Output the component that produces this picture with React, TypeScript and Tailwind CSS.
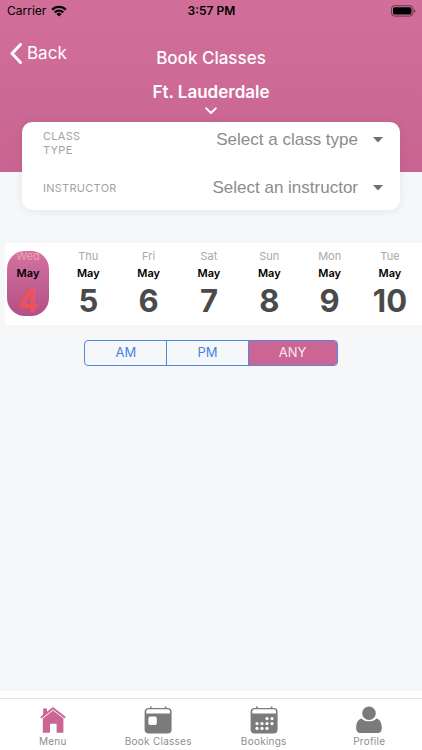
import { useState, type ReactNode } from "react";

const days = [
  { name: "Wed", month: "May", date: 4 },
  { name: "Thu", month: "May", date: 5 },
  { name: "Fri", month: "May", date: 6 },
  { name: "Sat", month: "May", date: 7 },
  { name: "Sun", month: "May", date: 8 },
  { name: "Mon", month: "May", date: 9 },
  { name: "Tue", month: "May", date: 10 },
];

const periods = ["AM", "PM", "ANY"];

function WifiIcon() {
  return (
    <svg viewBox="0 0 16 12" className="h-3 w-4" aria-hidden="true">
      <g fill="none" stroke="#000" strokeWidth="2.3">
        <path d="M1.2 4.7a9.7 9.7 0 0 1 13.6 0" />
        <path d="M3.8 7.4a6 6 0 0 1 8.4 0" />
      </g>
      <path d="M8 11.6 5.4 9a3.7 3.7 0 0 1 5.2 0z" />
    </svg>
  );
}

function BatteryIcon() {
  return (
    <svg viewBox="0 0 25 12" className="h-3 w-[25px]" aria-hidden="true">
      <rect x="0.5" y="0.7" width="21.4" height="10.4" rx="3" fill="none" stroke="#000" strokeOpacity="0.5" />
      <rect x="2" y="2.2" width="18.4" height="7.4" rx="1.6" />
      <path d="M23.2 4.2c1.6.6 1.6 3 0 3.6z" fillOpacity="0.6" />
    </svg>
  );
}

function HomeIcon() {
  return (
    <svg viewBox="0 0 26 28" className="h-7 w-[26px]" fill="#ca6594" aria-hidden="true">
      <path d="M3.2 2.6h3.8v4L3.2 9.8z" />
      <path d="M13 1 25.8 11 24.6 12.5 13 3.5 1.4 12.5.2 11z" />
      <path d="M13 4.4 23.4 12.5V26.8h-6.8v-9H10v9H2.8V12.5z" />
    </svg>
  );
}

function CalendarIcon({ children }: { children: ReactNode }) {
  return (
    <svg viewBox="0 0 28 28" className="h-7 w-7" fill="#7b7b7b" aria-hidden="true">
      <path d="M6 0.4h1.6v3H6zM20.8 0.4h1.6v3h-1.6z" />
      <rect x="0.6" y="2" width="27" height="25.4" rx="4" />
      <path d="M4.4 3.3h19.4a2.2 2.2 0 0 1 2.2 2.2v2.1H2.2V5.5a2.2 2.2 0 0 1 2.2-2.2z" fill="#fff" />
      {children}
    </svg>
  );
}

function ProfileIcon() {
  return (
    <svg viewBox="0 0 26 28" className="h-7 w-[26px]" fill="#7b7b7b" aria-hidden="true">
      <circle cx="13" cy="7.2" r="6.8" />
      <path d="M5.4 12.4c4 3.8 11.2 3.8 15.2 0 3.4.9 5.2 4.4 5.2 9.4 0 3.6-1.4 5.2-4.6 5.2H4.8c-3.2 0-4.6-1.6-4.6-5.2 0-5 1.8-8.5 5.2-9.4z" />
    </svg>
  );
}

const dots = [
  [17, 12.6], [22, 12.6],
  [7, 17.6], [12, 17.6], [17, 17.6], [22, 17.6],
  [7, 22.4], [12, 22.4], [17, 22.4],
];

const tabs = [
  { label: "Menu", icon: <HomeIcon /> },
  {
    label: "Book Classes",
    icon: (
      <CalendarIcon>
        <rect x="4.4" y="10.6" width="8.4" height="8.4" rx="1.8" fill="#fff" />
      </CalendarIcon>
    ),
  },
  {
    label: "Bookings",
    icon: (
      <CalendarIcon>
        {dots.map(([x, y]) => (
          <circle key={`${x}-${y}`} cx={x} cy={y} r="1.6" fill="#fff" />
        ))}
      </CalendarIcon>
    ),
  },
  { label: "Profile", icon: <ProfileIcon /> },
];

function FilterRow({ id, label, placeholder }: { id: string; label: string; placeholder: string }) {
  return (
    <div className="flex items-start justify-between">
      <label htmlFor={id} className="w-12 self-center py-[7px] text-[11px] leading-[14px] tracking-wide text-[#a3a3a3]">
        {label}
      </label>
      <div className="relative">
        <select
          id={id}
          className="block h-9 appearance-none bg-transparent pr-[25px] font-['Liberation_Sans',Arial,sans-serif] text-[17px] text-[#8c8c8c] [text-align-last:right]"
        >
          <option>{placeholder}</option>
        </select>
        <svg viewBox="0 0 10 6" className="pointer-events-none absolute top-[15px] right-0 h-[6px] w-[10px]" aria-hidden="true">
          <path d="M0 0h10L5 5.4z" fill="#6e6e6e" />
        </svg>
      </div>
    </div>
  );
}

export default function App() {
  const [selectedDate, setSelectedDate] = useState(4);
  const [period, setPeriod] = useState("ANY");

  return (
    <div className="flex min-h-screen flex-col bg-[#f6f7f9] font-['Inter',sans-serif]">
      <header className="h-[172px] bg-linear-to-b from-[#d16f9a] to-[#c96492]">
        <div className="grid h-[22px] grid-cols-3 items-center pr-[6px] pl-[7px] text-[12px] text-black">
          <div className="flex items-center gap-[5px]">
            Carrier <WifiIcon />
          </div>
          <div className="text-center font-semibold">3:57 PM</div>
          <div className="flex justify-end">
            <BatteryIcon />
          </div>
        </div>
        <div className="grid grid-cols-[1fr_auto_1fr] items-start pt-[18px] text-white">
          <button type="button" className="flex items-center gap-[5px] pl-[10px] text-[17px] leading-[26px]">
            <svg viewBox="0 0 12 21" className="h-[21px] w-3" fill="none" stroke="#fff" strokeWidth="3" strokeLinecap="round" strokeLinejoin="round" aria-hidden="true">
              <path d="M10.5 1.5 2 10.5l8.5 9" />
            </svg>
            Back
          </button>
          <div className="flex flex-col items-center pt-[6px]">
            <h1 className="text-[17px] leading-6 font-medium">Book Classes</h1>
            <button type="button" className="mt-[10px] flex flex-col items-center text-[17px] leading-6 font-semibold">
              Ft. Lauderdale
              <svg viewBox="0 0 12 8" className="mt-[3px] h-2 w-3" fill="none" stroke="#fff" strokeWidth="2" strokeLinecap="round" strokeLinejoin="round" aria-hidden="true">
                <path d="m1.2 1.4 4.8 4.6 4.8-4.6" />
              </svg>
            </button>
          </div>
        </div>
      </header>

      <main className="flex-1">
        <section className="relative mx-[22px] -mt-[50px] flex flex-col gap-[6px] rounded-[10px] bg-white pr-[17px] pb-1 pl-[21px] shadow-[0_1px_10px_rgba(0,0,0,0.08)]">
          <FilterRow id="class-type" label="CLASS TYPE" placeholder="Select a class type" />
          <FilterRow id="instructor" label="INSTRUCTOR" placeholder="Select an instructor" />
        </section>

        <div className="mt-[33px] ml-[5px] flex h-[82px] justify-between bg-white pt-2 pr-[11px] pl-[2px]">
          {days.map((day) => {
            const active = day.date === selectedDate;
            return (
              <button
                key={day.date}
                type="button"
                aria-pressed={active}
                onClick={() => setSelectedDate(day.date)}
                className={`flex h-[65px] w-[42px] flex-col items-center rounded-[18px] ${
                  active ? "bg-linear-to-b from-[#d273a0] to-[#b54f86]" : ""
                }`}
              >
                <span className={`-mt-[3px] text-[11px] leading-4 ${active ? "text-[#f0a5b5]" : "text-[#a8a8a8]"}`}>
                  {day.name}
                </span>
                <span className="text-[11px] leading-[18px] font-semibold text-black">{day.month}</span>
                <span className={`mt-[1px] text-[31px] leading-9 font-bold ${active ? "text-[#f0505a]" : "text-[#4a4a4a]"}`}>
                  {day.date}
                </span>
              </button>
            );
          })}
        </div>

        <div className="mx-auto mt-[15px] grid h-[26px] w-3/5 grid-cols-[83fr_82fr_89fr] divide-x divide-[#4f86e8] overflow-hidden rounded-[4px] border border-[#4f86e8]">
          {periods.map((p) => (
            <button
              key={p}
              type="button"
              aria-pressed={p === period}
              onClick={() => setPeriod(p)}
              className={`text-[13px] ${p === period ? "bg-[#ca6594] text-[#fbe8f2]" : "text-[#4583e4]"}`}
            >
              {p}
            </button>
          ))}
        </div>
      </main>

      <nav className="border-t-[7px] border-white">
        <div className="grid h-[52px] grid-cols-4 border-t border-[#e4e4e6] bg-white">
          {tabs.map((tab) => (
            <a key={tab.label} href="#" className="flex flex-col items-center pt-[7px] text-[10px] leading-[14px] tracking-wide text-[#8e8e8e]">
              {tab.icon}
              {tab.label}
            </a>
          ))}
        </div>
      </nav>
    </div>
  );
}
